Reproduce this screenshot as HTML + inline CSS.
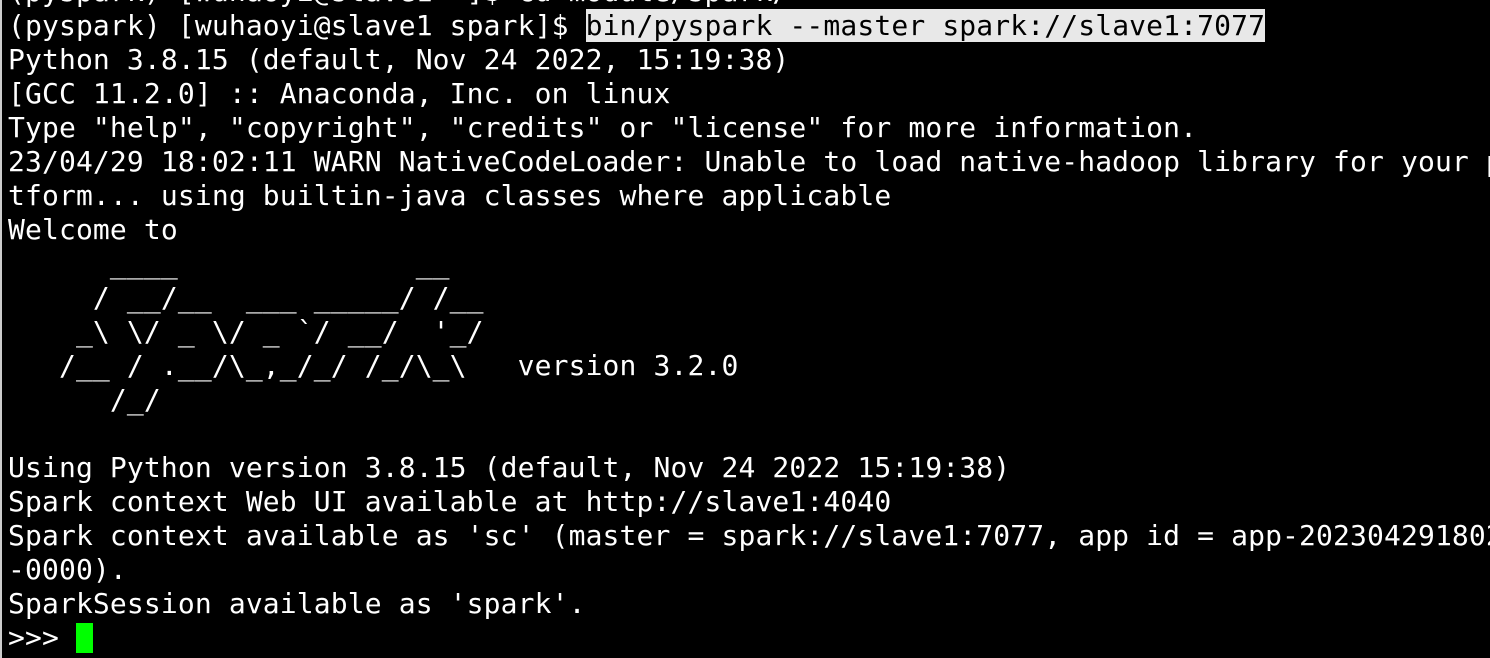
<!DOCTYPE html>
<html><head><style>
html,body{margin:0;padding:0;background:#000;width:1490px;height:658px;overflow:hidden}
pre{position:absolute;left:8px;top:-25px;margin:0;font-family:"DejaVu Sans Mono","Liberation Mono",monospace;font-size:28px;line-height:34px;color:#fff;letter-spacing:0.13px;white-space:pre}
.hl{background:#e8e8e8;color:#000}
.cur{display:inline-block;width:17px;height:30px;background:#00ff00;vertical-align:-6px}
.edge{position:absolute;left:0;top:0;width:2px;height:658px;background:#ccc}
</style></head><body>
<div class="edge"></div>
<pre>(pyspark) [wuhaoyi@slave1 ~]$ cd module/spark/
(pyspark) [wuhaoyi@slave1 spark]$ <span class="hl">bin/pyspark --master spark://slave1:7077</span>
Python 3.8.15 (default, Nov 24 2022, 15:19:38)
[GCC 11.2.0] :: Anaconda, Inc. on linux
Type "help", "copyright", "credits" or "license" for more information.
23/04/29 18:02:11 WARN NativeCodeLoader: Unable to load native-hadoop library for your pla
tform... using builtin-java classes where applicable
Welcome to
      ____              __
     / __/__  ___ _____/ /__
    _\ \/ _ \/ _ `/ __/  '_/
   /__ / .__/\_,_/_/ /_/\_\   version 3.2.0
      /_/

Using Python version 3.8.15 (default, Nov 24 2022 15:19:38)
Spark context Web UI available at http://slave1:4040
Spark context available as 'sc' (master = spark://slave1:7077, app id = app-20230429180212
-0000).
SparkSession available as 'spark'.
&gt;&gt;&gt; <span class="cur"></span></pre>
</body></html>
